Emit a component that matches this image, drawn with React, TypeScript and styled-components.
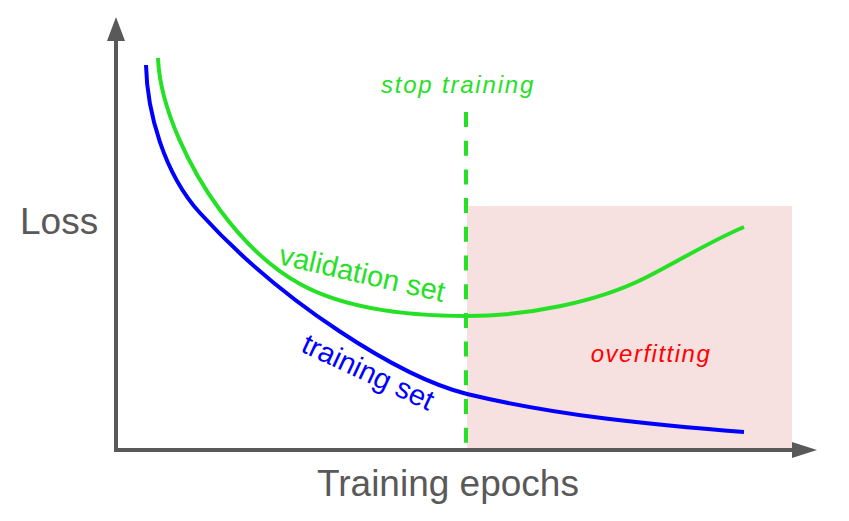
import React from 'react';
import styled, { createGlobalStyle } from 'styled-components';

const GlobalStyle = createGlobalStyle`
    html, body {
        margin: 0;
        padding: 0;
        background: #fff;
    }
    body {
        font-family: "Liberation Sans", Arial, sans-serif;
    }
`;

const AXIS = '#595959';
const GREEN = '#26e026';
const BLUE = '#0000ff';
const RED = '#ff0000';

export const Figure = styled.div`
    display: grid;
    grid-template-columns: 105px 744px;
    grid-template-rows: 464px 57px;
    width: 849px;
    height: 521px;
    overflow: hidden;
    background: #fff;
`;

export const AxisTitle = styled.div<{ $padTop?: number; $padLeft?: number; $span?: boolean }>`
    grid-column: ${(p) => (p.$span ? '1 / -1' : 'auto')};
    padding-top: ${(p) => p.$padTop ?? 0}px;
    padding-left: ${(p) => p.$padLeft ?? 0}px;
    font-family: "Liberation Sans", Arial, sans-serif;
    font-size: 37px;
    line-height: 37px;
    color: ${AXIS};
    white-space: nowrap;
`;

export const Plot = styled.svg`
    display: block;
    width: 744px;
    height: 464px;
`;

export const Note = styled.text<{ $color: string; $size: number; $spacing?: number }>`
    font-family: "Liberation Sans", Arial, sans-serif;
    font-style: italic;
    font-size: ${(p) => p.$size}px;
    letter-spacing: ${(p) => p.$spacing ?? 0}px;
    fill: ${(p) => p.$color};
`;

export const CurveLabel = styled.text<{ $color: string }>`
    font-family: "Liberation Sans", Arial, sans-serif;
    font-size: 29px;
    fill: ${(p) => p.$color};
`;

export const Curve = styled.path<{ $color: string }>`
    fill: none;
    stroke: ${(p) => p.$color};
    stroke-width: 4px;
`;

// hand-fitted beziers, tangents matched at each joint
const TRAINING =
    'M146,65 C147,112 164,173.4 200,213 C282,303.2 400,377.2 467,394 C557,415.6 654,425.25 744,432';

const VALIDATION =
    'M158,58 C160,110 192,172.2 220,210 C247,246.5 273,269.15 300,284 C345,308.75 407,316 467,316 ' +
    'C527,316 597,302.5 647,277 C679,260.7 712,240.4 744,227';

const LossChart: React.FC = () => (
    <Plot viewBox="105 0 744 464">
        <rect x={467} y={206} width={325} height={242} fill="#f7e0e0" />

        <line x1={466} y1={112} x2={466} y2={443} stroke={GREEN} strokeWidth={4} strokeDasharray="15 13.7" />

        <Curve d={VALIDATION} $color={GREEN} />
        <Curve d={TRAINING} $color={BLUE} />

        <line x1={116} y1={38} x2={116} y2={452} stroke={AXIS} strokeWidth={4} />
        <polygon points="116,17 107,41 125,41" fill={AXIS} />
        <line x1={114} y1={450} x2={795} y2={450} stroke={AXIS} strokeWidth={4} />
        <polygon points="817,450 792,442 792,458" fill={AXIS} />

        <Note x={458} y={93} textAnchor="middle" $color={GREEN} $size={24} $spacing={1.8}>
            stop training
        </Note>
        <Note x={651} y={362} textAnchor="middle" $color={RED} $size={24} $spacing={1.5}>
            overfitting
        </Note>

        <CurveLabel x={360} y={283} textAnchor="middle" transform="rotate(13 360 283)" $color={GREEN}>
            validation set
        </CurveLabel>
        <CurveLabel x={364} y={381} textAnchor="middle" transform="rotate(25 364 381)" $color={BLUE}>
            training set
        </CurveLabel>
    </Plot>
);

const App: React.FC = () => (
    <>
        <GlobalStyle />
        <Figure>
            <AxisTitle $padTop={203} $padLeft={20}>
                Loss
            </AxisTitle>
            <LossChart />
            <AxisTitle $span $padTop={1} $padLeft={317}>
                Training epochs
            </AxisTitle>
        </Figure>
    </>
);

export default App;
